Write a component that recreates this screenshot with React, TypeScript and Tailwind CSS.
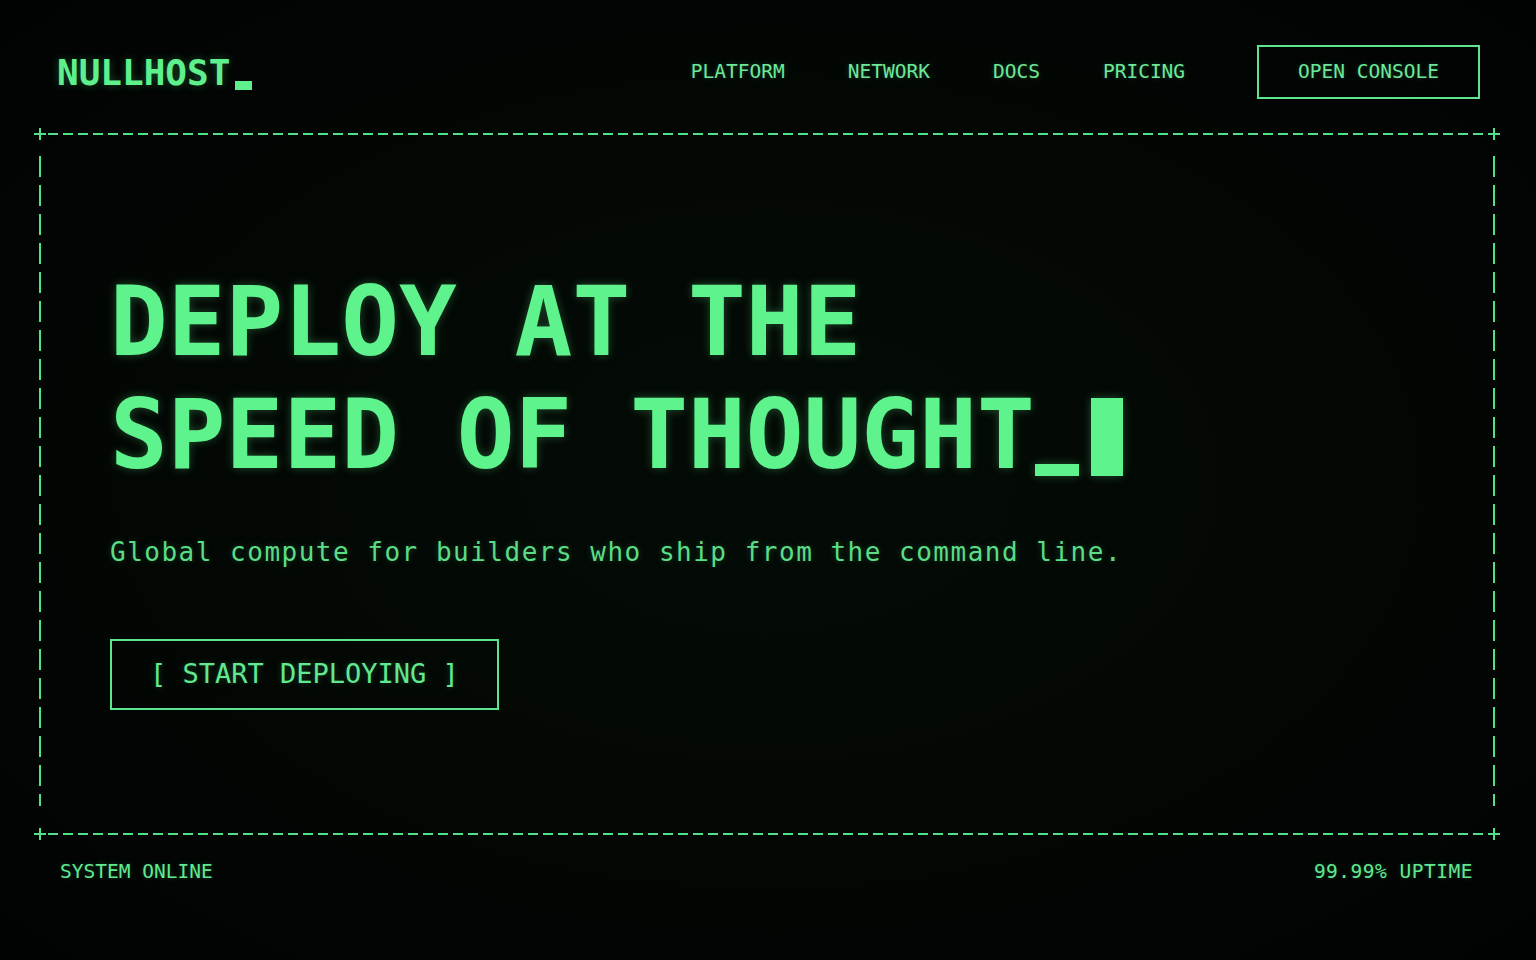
import React from 'react';

const NAV = ['PLATFORM', 'NETWORK', 'DOCS', 'PRICING'];

const mono = "font-['DejaVu_Sans_Mono','Liberation_Mono',monospace]";

function Plus() {
  return (
    <svg width="12" height="12" viewBox="0 0 12 12" className="shrink-0">
      <rect x="5" y="0" width="2" height="12" fill="#4fe286" />
      <rect x="0" y="5" width="12" height="2" fill="#4fe286" />
    </svg>
  );
}

function HLine() {
  return (
    <div className="flex items-center h-[12px]">
      <Plus />
      <div className="flex-1 h-[2px] mx-[2px] bg-[repeating-linear-gradient(90deg,#4fe286_0_10px,transparent_10px_15px)]" />
      <Plus />
    </div>
  );
}

function VLine() {
  return (
    <div className="w-[2px] h-[650px] bg-[repeating-linear-gradient(180deg,#4fe286_0_21px,transparent_21px_29px)]" />
  );
}

export default function App() {
  return (
    <div
      className={`${mono} w-[1536px] h-[960px] overflow-hidden bg-[radial-gradient(ellipse_at_center,#040b06_0%,#030704_60%,#010302_100%)] text-[#62f08e]`}
    >
      {/* header */}
      <header className="flex items-center pt-[45px] pl-[57px] pr-[56px]">
        <div className="flex items-end text-[36px] leading-[53px] font-bold text-[#5ef08c] [text-shadow:0_0_8px_rgba(94,240,140,0.3)]">
          NULLHOST
          <span className="inline-block w-[17px] h-[9px] bg-[#5ef08c] mb-[9px] ml-[5px]" />
        </div>
        <nav className="ml-auto flex items-center gap-[63px] text-[19.5px] text-[#6ee79a]">
          {NAV.map((n) => (
            <a key={n} className="[text-shadow:0_0_5px_rgba(94,240,140,0.25)]">
              {n}
            </a>
          ))}
        </nav>
        <button className="ml-[72px] h-[54px] px-[39px] border-2 border-[#5be58c] text-[19.5px] text-[#6ee79a] [text-shadow:0_0_5px_rgba(94,240,140,0.25)]">
          OPEN CONSOLE
        </button>
      </header>

      {/* frame */}
      <div className="ml-[34px] w-[1466px] mt-[29px]">
        <HLine />
        <div className="flex h-[688px]">
          <div className="pl-[5px] pt-[16px]">
            <VLine />
          </div>
          <div className="flex-1 pl-[69px] pt-[126px]">
            <h1 className="text-[96px] leading-[113px] font-bold text-[#5ef38c] [text-shadow:0_0_10px_rgba(94,243,140,0.3)]">
              <div>DEPLOY AT THE</div>
              <div className="flex items-end">
                SPEED OF THOUGHT
                <span className="inline-block w-[44px] h-[12px] bg-[#5ef38c] mb-[16px] shadow-[0_0_10px_rgba(94,243,140,0.3)]" />
                <span className="inline-block w-[32px] h-[78px] bg-[#5ef38c] ml-[12px] mb-[16px] shadow-[0_0_10px_rgba(94,243,140,0.3)]" />
              </div>
            </h1>
            <p className="mt-[42px] text-[26px] leading-[36px] tracking-[1.5px] text-[#5bdc87] [text-shadow:0_0_6px_rgba(94,240,140,0.25)]">
              Global compute for builders who ship from the command line.
            </p>
            <button className="mt-[69px] h-[71px] px-[38px] border-2 border-[#5be58c] text-[27px] text-[#62e891] [text-shadow:0_0_6px_rgba(94,240,140,0.25)]">
              [ START DEPLOYING ]
            </button>
          </div>
          <div className="pr-[5px] pt-[16px]">
            <VLine />
          </div>
        </div>
        <HLine />
      </div>

      {/* footer */}
      <footer className="flex justify-between pl-[60px] pr-[63px] mt-[20px] text-[19.5px] leading-[24px] text-[#62e891] [text-shadow:0_0_5px_rgba(94,240,140,0.25)]">
        <span>SYSTEM ONLINE</span>
        <span className="tracking-[0.5px]">99.99% UPTIME</span>
      </footer>
    </div>
  );
}
